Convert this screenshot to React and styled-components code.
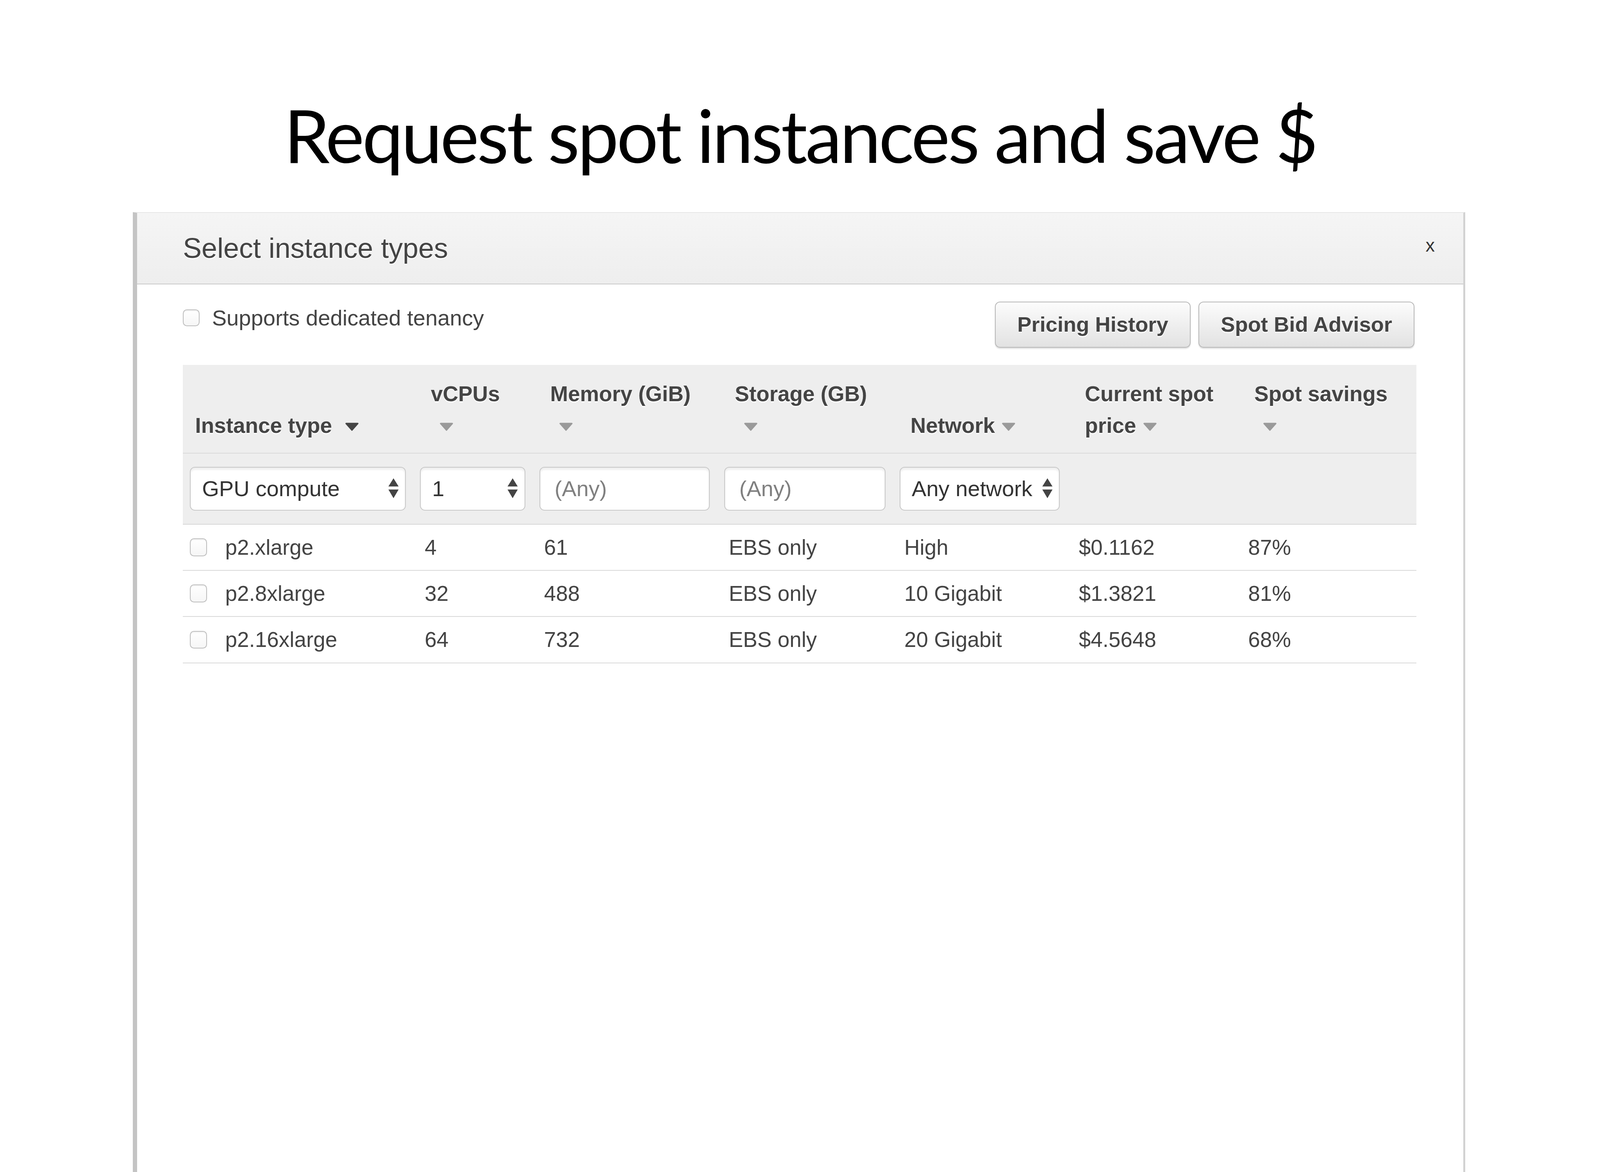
import React from "react";
import styled, { createGlobalStyle } from "styled-components";

// 1rem = 10 slide units; the slide is 1568 units wide, so it always fills the window
const COLS = "23rem 11.7rem 18.1rem 17.2rem 17.1rem 16.6rem 17.2rem";

const GlobalStyle = createGlobalStyle`
  html {
    font-size: calc(100vw / 156.8);
    overflow: hidden;
  }
  body {
    margin: 0;
    padding: 0;
    background: #fff;
    overflow: hidden;
    font-size: 2.1rem;
  }
`;

const Page = styled.div`
  min-height: max(88.2rem, 100vh);
  display: flex;
  flex-direction: column;
  font-family: "Liberation Sans", Arial, sans-serif;
  color: #444;
`;

const SlideTitle = styled.h1`
  margin: 8.9rem 0 0;
  font-family: "Lato", "Open Sans", sans-serif;
  font-weight: 400;
  font-size: 7.2rem;
  line-height: 8.64rem;
  letter-spacing: -0.2rem;
  text-align: center;
  color: #000;
`;

const Dialog = styled.div`
  flex: 1;
  margin: 3.26rem 0 0 13rem;
  width: 130.6rem;
  box-sizing: border-box;
  border-left: 0.44rem solid #c4c4c4;
  border-right: 0.2rem solid #d2d2d2;
  border-top: 0.1rem solid #e6e6e6;
  background: #fff;
  display: flex;
  flex-direction: column;
`;

const DialogHeader = styled.div`
  height: 6.9rem;
  border-bottom: 0.1rem solid #c9c9c9;
  background: linear-gradient(#f5f5f5, #eeeeee);
  display: flex;
  align-items: center;
  justify-content: space-between;
  padding: 0 2.8rem 0 4.5rem;
`;

const DialogTitle = styled.div`
  font-size: 2.75rem;
  color: #444;
  text-shadow: 0 0.1rem 0 #fff;
`;

const Close = styled.span`
  font-size: 1.8rem;
  color: #333;
  margin-top: -0.6rem;
`;

const Body = styled.div`
  padding: 0 4.6rem 0 4.5rem;
`;

const Toolbar = styled.div`
  display: flex;
  justify-content: space-between;
  align-items: flex-start;
  padding: 1.7rem 0;
`;

const CheckLabel = styled.label`
  display: flex;
  align-items: center;
  gap: 1.2rem;
  margin-top: 0.35rem;
  font-size: 2.15rem;
  line-height: 2.5rem;
  color: #444;
`;

const Box = styled.span`
  display: inline-block;
  flex: none;
  width: 1.5rem;
  height: ${(p) => (p.tall ? 1.6 : 1.5)}rem;
  border: 0.1rem solid #bdbdbd;
  border-radius: 0.4rem;
  background: linear-gradient(#fff, #f6f6f6);
  box-shadow: inset 0 0.1rem 0.1rem rgba(0, 0, 0, 0.06);
`;

const Buttons = styled.div`
  display: flex;
  gap: 0.8rem;
  margin-right: 0.2rem;
`;

const Button = styled.button`
  height: 4.5rem;
  padding: 0 2.1rem;
  border: 0.1rem solid #b8b8b8;
  border-radius: 0.5rem;
  background: linear-gradient(#fcfcfc, #e2e2e2);
  box-shadow: 0 0.1rem 0.1rem rgba(0, 0, 0, 0.12);
  font-family: "Liberation Sans", Arial, sans-serif;
  font-weight: 700;
  font-size: 2.08rem;
  color: #444;
  text-shadow: 0 0.1rem 0 #fff;
`;

const Row = styled.div`
  display: grid;
  grid-template-columns: ${COLS};
`;

const HeadRow = styled(Row)`
  background: #eee;
  align-items: end;
  padding: 1.3rem 0 1.1rem;
`;

const HeadCell = styled.div`
  padding-left: ${(p) => (p.first ? 1.2 : 1.3)}rem;
  font-weight: 700;
  font-size: 2.1rem;
  line-height: 3.1rem;
  color: #444;
  text-shadow: 0 0.1rem 0 #fff;
  white-space: nowrap;
`;

const FilterRow = styled(Row)`
  background: #eee;
  border-top: 0.1rem solid #dadada;
  border-bottom: 0.1rem solid #d6d6d6;
  padding: 1.3rem 0;
`;

const FilterCell = styled.div`
  padding: 0 1.15rem 0 ${(p) => (p.first ? 0.7 : 0.25)}rem;
`;

const fieldLook = `
  box-sizing: border-box;
  width: 100%;
  height: 4.3rem;
  border: 0.1rem solid #c8c8c8;
  border-radius: 0.5rem;
  background: #fff;
  box-shadow: inset 0 0.2rem 0.2rem rgba(0, 0, 0, 0.07);
  font-family: "Liberation Sans", Arial, sans-serif;
  font-size: 2.15rem;
  color: #333;
`;

const SelectBox = styled.div`
  ${fieldLook}
  display: flex;
  align-items: center;
  justify-content: space-between;
  padding: 0 0.6rem 0 1.1rem;
`;

const TextField = styled.input`
  ${fieldLook}
  padding: 0 0 0 1.4rem;
  outline: none;
  &::placeholder {
    color: #808080;
  }
`;

const DataRow = styled(Row)`
  height: 4.45rem;
  align-items: center;
  border-bottom: 0.1rem solid #d9d9d9;
`;

const DataCell = styled.div`
  display: flex;
  align-items: center;
  gap: 1.8rem;
  padding-left: 0.7rem;
  font-size: 2.1rem;
  color: #444;
  white-space: nowrap;
`;

const SortArrow = styled.svg`
  width: 1.3rem;
  height: 0.8rem;
  vertical-align: 0.2rem;
  margin-left: ${(p) => p.gap / 10}rem;
`;

const UpDownIcon = styled.svg`
  width: 1.1rem;
  height: 2.1rem;
  flex: none;
`;

const Arrow = ({ dark, gap }) => (
  <SortArrow viewBox="0 0 13 8" gap={gap}>
    <polygon
      points="0.8,0.8 12.2,0.8 6.5,7.2"
      fill={dark ? "#444" : "#9a9a9a"}
      stroke={dark ? "#444" : "#9a9a9a"}
      strokeWidth="1.4"
      strokeLinejoin="round"
    />
  </SortArrow>
);

const UpDown = () => (
  <UpDownIcon viewBox="0 0 11 21">
    <polygon points="5.5,0.5 10.5,8.5 0.5,8.5" fill="#444" />
    <polygon points="0.5,11.5 10.5,11.5 5.5,20" fill="#444" />
  </UpDownIcon>
);

const columns = [
  { lines: ["Instance type"], inline: true, dark: true, gap: 13 },
  { lines: ["vCPUs"] },
  { lines: ["Memory (GiB)"] },
  { lines: ["Storage (GB)"] },
  { lines: ["Network"], inline: true, gap: 7 },
  { lines: ["Current spot", "price"], inline: true, gap: 7 },
  { lines: ["Spot savings"] },
];

const instances = [
  ["p2.xlarge", "4", "61", "EBS only", "High", "$0.1162", "87%"],
  ["p2.8xlarge", "32", "488", "EBS only", "10 Gigabit", "$1.3821", "81%"],
  ["p2.16xlarge", "64", "732", "EBS only", "20 Gigabit", "$4.5648", "68%"],
];

const HeadLabel = ({ col }) => (
  <>
    {col.lines.map((line, i) => (
      <div key={line}>
        {line}
        {col.inline && i === col.lines.length - 1 && <Arrow dark={col.dark} gap={col.gap} />}
      </div>
    ))}
    {!col.inline && (
      <div>
        <Arrow gap={9} />
      </div>
    )}
  </>
);

export default function App() {
  return (
    <Page>
      <GlobalStyle />
      <SlideTitle>Request spot instances and save $</SlideTitle>
      <Dialog>
        <DialogHeader>
          <DialogTitle>Select instance types</DialogTitle>
          <Close>x</Close>
        </DialogHeader>
        <Body>
          <Toolbar>
            <CheckLabel>
              <Box />
              Supports dedicated tenancy
            </CheckLabel>
            <Buttons>
              <Button>Pricing History</Button>
              <Button>Spot Bid Advisor</Button>
            </Buttons>
          </Toolbar>

          <HeadRow>
            {columns.map((col, i) => (
              <HeadCell key={col.lines[0]} first={i === 0}>
                <HeadLabel col={col} />
              </HeadCell>
            ))}
          </HeadRow>

          <FilterRow>
            <FilterCell first>
              <SelectBox>
                GPU compute
                <UpDown />
              </SelectBox>
            </FilterCell>
            <FilterCell>
              <SelectBox>
                1
                <UpDown />
              </SelectBox>
            </FilterCell>
            <FilterCell>
              <TextField placeholder="(Any)" />
            </FilterCell>
            <FilterCell>
              <TextField placeholder="(Any)" />
            </FilterCell>
            <FilterCell>
              <SelectBox>
                Any network
                <UpDown />
              </SelectBox>
            </FilterCell>
          </FilterRow>

          {instances.map((row) => (
            <DataRow key={row[0]}>
              {row.map((value, i) => (
                <DataCell key={i}>
                  {i === 0 && <Box tall />}
                  {value}
                </DataCell>
              ))}
            </DataRow>
          ))}
        </Body>
      </Dialog>
    </Page>
  );
}
